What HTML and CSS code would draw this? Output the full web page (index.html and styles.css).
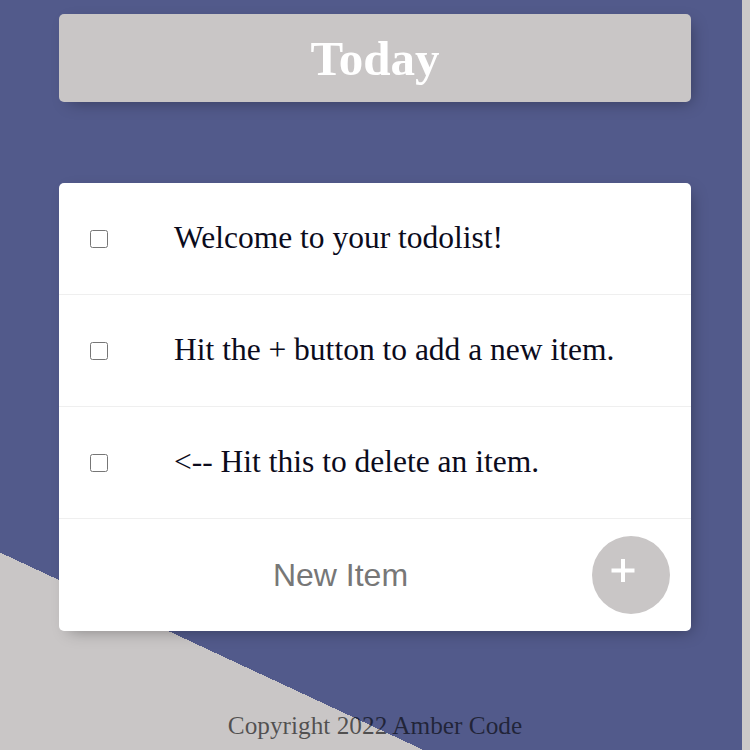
FILE: index.html
```html
<!DOCTYPE html>
<html lang="en">
<head>
<meta charset="utf-8">
<title>To-Do List</title>
<link rel="stylesheet" href="styles.css">
</head>
<body>
  <main class="page">
    <div class="box heading">
      <h1>Today</h1>
    </div>
    <div class="box list">
      <div class="item">
        <input type="checkbox" class="check">
        <p>Welcome to your todolist!</p>
      </div>
      <div class="item">
        <input type="checkbox" class="check">
        <p>Hit the + button to add a new item.</p>
      </div>
      <div class="item">
        <input type="checkbox" class="check">
        <p>&lt;-- Hit this to delete an item.</p>
      </div>
      <form class="item new-item" action="/" method="post">
        <input type="text" name="newItem" placeholder="New Item" autocomplete="off">
        <button type="submit" class="add" aria-label="Add">
          <svg viewBox="0 0 78 78" width="78" height="78" aria-hidden="true">
            <path d="M19.5 34.5H42.5M31 23V46" stroke="#ffffff" stroke-width="4" fill="none"/>
          </svg>
        </button>
      </form>
    </div>
  </main>
  <footer class="footer">Copyright 2022 Amber Code</footer>
</body>
</html>
```
FILE: styles.css
```css
html {
  height: 100%;
  overflow: hidden;
  background:
    linear-gradient(to right, transparent 742px, #cbc8c8 742px),
    linear-gradient(25deg, #c9c6c6 179px, #525a8b 179px);
}

body {
  margin: 0;
  font-family: "Liberation Serif", "Times New Roman", serif;
}

.page {
  width: 632px;
  margin: 0 auto;
  padding-top: 14px;
  display: flex;
  flex-direction: column;
  gap: 81px;
}

.box {
  border-radius: 5px;
  box-shadow: 5px 5px 15px -5px rgba(0, 0, 0, 0.35);
}

.heading {
  height: 88px;
  background: #c9c6c6;
  display: flex;
  align-items: center;
  justify-content: center;
}

.heading h1 {
  margin: 0;
  color: #ffffff;
  font-size: 49px;
  font-weight: bold;
  line-height: 1;
  padding-top: 1px;
}

.list {
  background: #ffffff;
  overflow: hidden;
}

.item {
  height: 112px;
  box-sizing: border-box;
  display: flex;
  align-items: center;
  border-bottom: 1px solid #efefef;
}

.item:last-child {
  border-bottom: none;
}

.check {
  width: 18px;
  height: 18px;
  margin: 0 66px 0 31px;
}

.item p {
  margin: 0 0 2px 0;
  font-size: 31.5px;
  line-height: 40px;
  color: #0b0b1c;
}

.new-item input[type="text"] {
  flex: 1;
  min-width: 0;
  margin-left: 30px;
  border: none;
  outline: none;
  background: transparent;
  text-align: center;
  font-family: "Liberation Sans", Arial, sans-serif;
  font-size: 32px;
  height: 60px;
  padding: 0;
}

.new-item input[type="text"]::placeholder {
  color: #777777;
}

.add {
  width: 78px;
  height: 78px;
  margin: 0 21px 0 0;
  padding: 0;
  border: none;
  border-radius: 50%;
  background: #c9c6c6;
  display: flex;
  align-items: center;
  justify-content: center;
}

.add svg {
  display: block;
}

.footer {
  margin-top: 79px;
  text-align: center;
  font-size: 25.3px;
  line-height: 30px;
  color: rgba(0, 0, 0, 0.6);
}
```
